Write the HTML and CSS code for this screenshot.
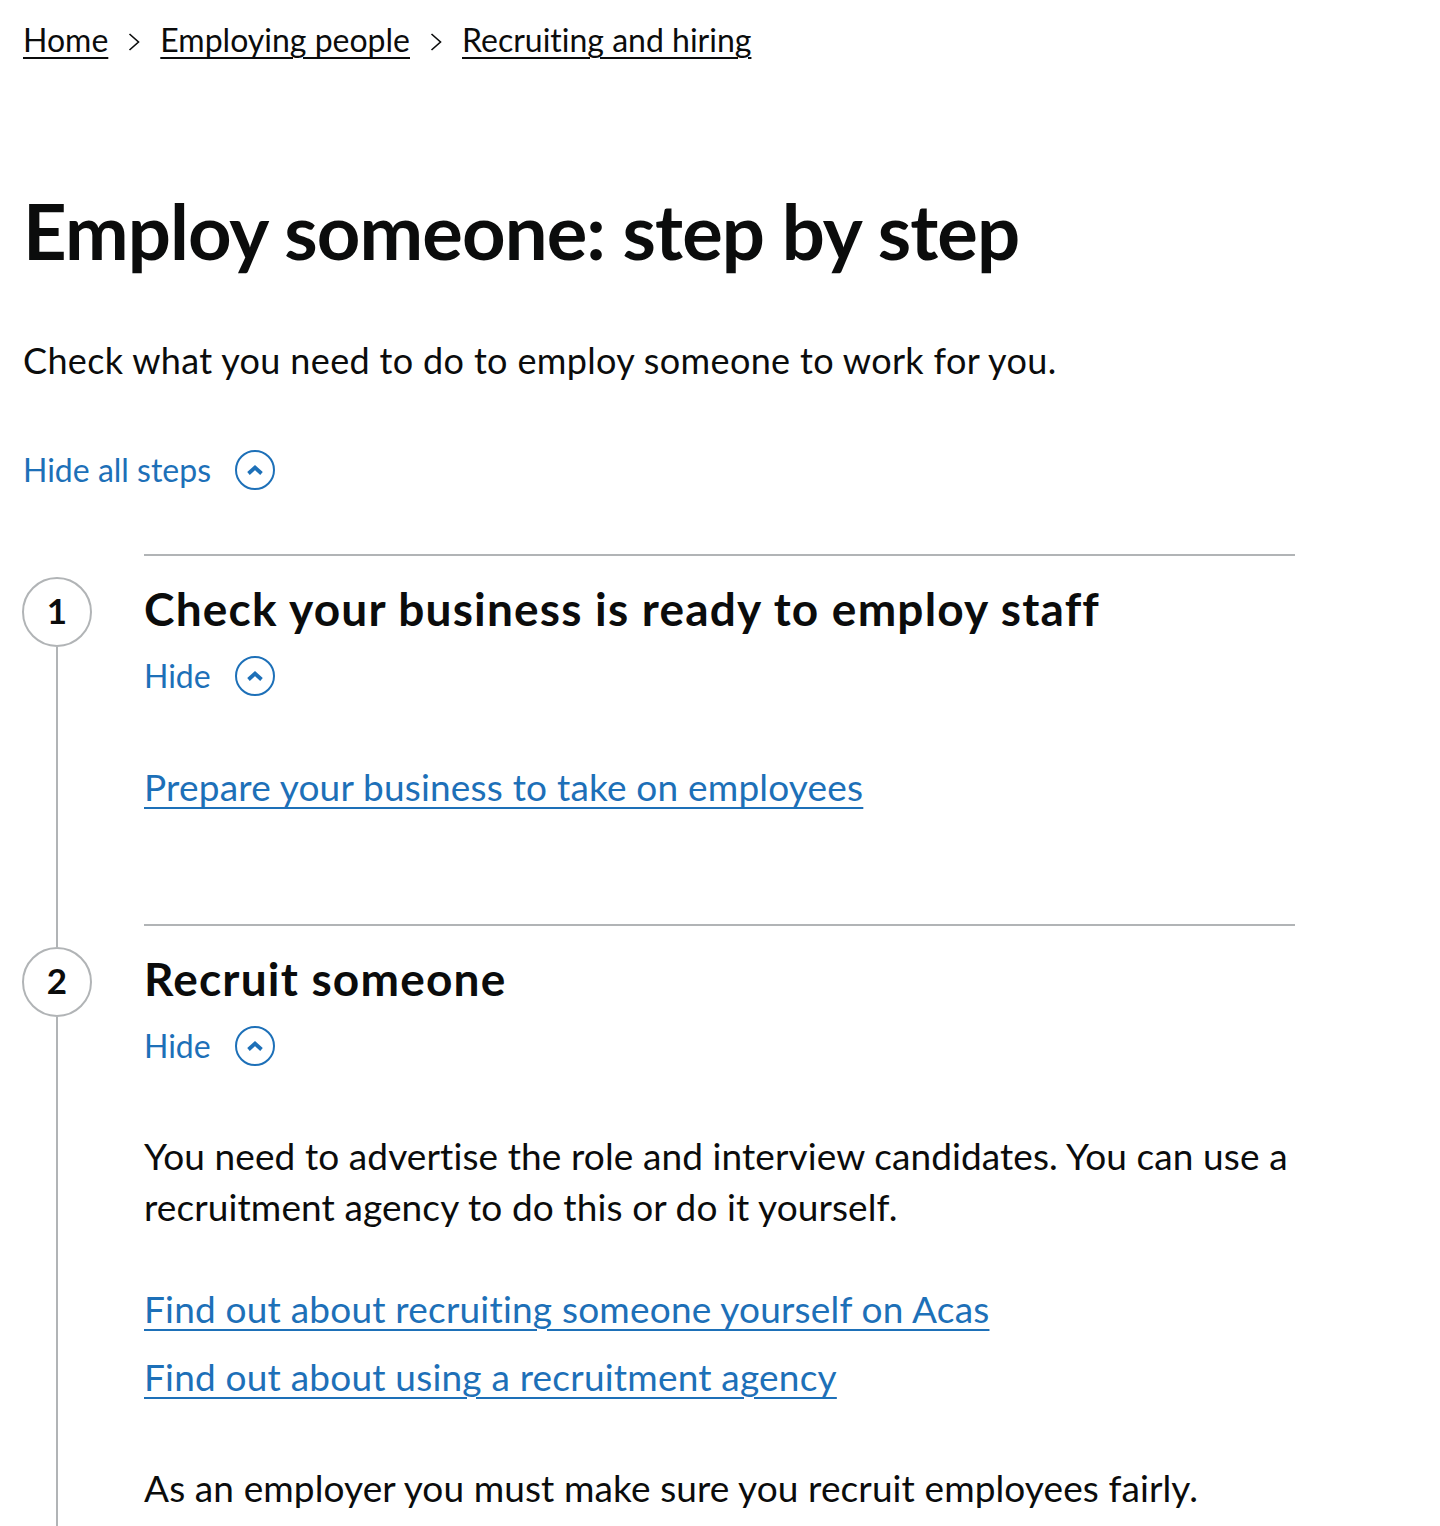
FILE: index.html
```html
<!DOCTYPE html>
<html lang="en">
<head>
<meta charset="utf-8">
<title>Employ someone: step by step</title>
<link rel="stylesheet" href="styles.css">
</head>
<body>
<div class="page">
  <nav class="breadcrumbs">
    <a href="#">Home</a>
    <svg class="crumb-sep" width="12" height="18" viewBox="0 0 12 18"><polyline points="1.5,1 10.5,9 1.5,17" fill="none" stroke="#0b0c0c" stroke-width="1.6"/></svg>
    <a href="#">Employing people</a>
    <svg class="crumb-sep" width="12" height="18" viewBox="0 0 12 18"><polyline points="1.5,1 10.5,9 1.5,17" fill="none" stroke="#0b0c0c" stroke-width="1.6"/></svg>
    <a href="#">Recruiting and hiring</a>
  </nav>

  <h1 class="title">Employ someone: step by step</h1>
  <p class="lead">Check what you need to do to employ someone to work for you.</p>

  <div class="toggle toggle-all">
    <span class="toggle-text">Hide all steps</span>
    <svg class="chev" width="40" height="40" viewBox="0 0 40 40"><circle cx="20" cy="20" r="19" fill="none" stroke="#1d70b8" stroke-width="2"/><polyline points="13.5,23.5 20,17.5 26.5,23.5" fill="none" stroke="#1d70b8" stroke-width="3.8"/></svg>
  </div>

  <ol class="steps">
    <li class="step first">
      <div class="rail">
        <div class="rail-top"></div>
        <div class="num">1</div>
        <div class="rail-bottom"></div>
      </div>
      <div class="content">
        <h2 class="step-title">Check your business is ready to employ staff</h2>
        <div class="toggle">
          <span class="toggle-text">Hide</span>
          <svg class="chev" width="40" height="40" viewBox="0 0 40 40"><circle cx="20" cy="20" r="19" fill="none" stroke="#1d70b8" stroke-width="2"/><polyline points="13.5,23.5 20,17.5 26.5,23.5" fill="none" stroke="#1d70b8" stroke-width="3.8"/></svg>
        </div>
        <ul class="links first-links">
          <li><a href="#">Prepare your business to take on employees</a></li>
        </ul>
      </div>
    </li>
    <li class="step last">
      <div class="rail">
        <div class="rail-top"></div>
        <div class="num">2</div>
        <div class="rail-bottom"></div>
      </div>
      <div class="content">
        <h2 class="step-title">Recruit someone</h2>
        <div class="toggle">
          <span class="toggle-text">Hide</span>
          <svg class="chev" width="40" height="40" viewBox="0 0 40 40"><circle cx="20" cy="20" r="19" fill="none" stroke="#1d70b8" stroke-width="2"/><polyline points="13.5,23.5 20,17.5 26.5,23.5" fill="none" stroke="#1d70b8" stroke-width="3.8"/></svg>
        </div>
        <p class="body">You need to advertise the role and interview candidates. You can use a recruitment agency to do this or do it yourself.</p>
        <ul class="links">
          <li><a href="#">Find out about recruiting someone yourself on Acas</a></li>
          <li><a href="#">Find out about using a recruitment agency</a></li>
        </ul>
        <p class="body">As an employer you must make sure you recruit employees fairly.</p>
      </div>
    </li>
  </ol>
</div>
</body>
</html>
```

FILE: styles.css
```css
html, body {
  margin: 0;
  padding: 0;
  background: #ffffff;
}

body {
  font-family: Lato, "Noto Sans", Arial, sans-serif;
  color: #0b0c0c;
  overflow: hidden;
  height: 1526px;
  font-variant-ligatures: none;
  font-feature-settings: "liga" 0, "clig" 0;
}

.page {
  padding: 20px 23px 0 23px;
}

a {
  color: inherit;
}

/* Breadcrumbs */
.breadcrumbs {
  display: flex;
  align-items: center;
  font-size: 32px;
  line-height: 40px;
  gap: 20px;
}

.breadcrumbs a {
  color: #0b0c0c;
  text-decoration: underline;
  text-decoration-thickness: 2px;
  text-underline-offset: 5px;
}

.crumb-sep {
  display: block;
  margin-top: 4px;
}

/* Heading */
.title {
  margin: 126px 0 0 0;
  font-size: 76px;
  line-height: 90px;
  font-weight: 700;
  letter-spacing: -0.9px;
}

.lead {
  margin: 62px 0 0 0;
  font-size: 36px;
  line-height: 45px;
  letter-spacing: 0.35px;
}

/* toggles */
.toggle {
  display: flex;
  align-items: center;
  gap: 24px;
  color: #1d70b8;
  font-size: 32px;
  line-height: 40px;
}

.toggle-all {
  margin-top: 67px;
}

.chev {
  display: block;
}

/* steps */
.steps {
  list-style: none;
  margin: 64px 0 0 0;
  padding: 0;
}

.step {
  display: grid;
  grid-template-columns: 121px 1151px;
}

.rail {
  display: flex;
  flex-direction: column;
  align-items: flex-start;
}

.rail-top {
  width: 2px;
  height: 23px;
  margin-left: 33px;
  background: #b1b4b6;
}

.first .rail-top {
  background: transparent;
}

.rail-bottom {
  width: 2px;
  flex: 1;
  margin-left: 33px;
  background: #b1b4b6;
}

.num {
  box-sizing: border-box;
  width: 70px;
  height: 70px;
  margin-left: -1px;
  padding-bottom: 5px;
  border: 2px solid #b1b4b6;
  border-radius: 50%;
  display: flex;
  align-items: center;
  justify-content: center;
  font-size: 35px;
  font-weight: 700;
  background: #fff;
}

.content {
  border-top: 2px solid #b1b4b6;
  padding-top: 25px;
}

.first .content {
  padding-bottom: 112px;
}

.last .content {
  padding-bottom: 80px;
}

.step-title {
  margin: 0 0 20px 0;
  font-size: 46px;
  line-height: 55px;
  font-weight: 700;
  letter-spacing: 1.2px;
}

.links {
  list-style: none;
  margin: 65px 0 0 0;
  padding: 0;
}

.links li + li {
  margin-top: 17px;
}

.links a {
  color: #1d70b8;
  text-decoration: underline;
  text-decoration-thickness: 2px;
  text-underline-offset: 6px;
}

.links li {
  font-size: 37px;
  line-height: 51px;
  letter-spacing: 0.2px;
}

.body {
  margin: 64px 0 0 0;
  font-size: 37px;
  line-height: 51px;
  letter-spacing: 0.1px;
}

.links + .body {
  margin-top: 60px;
}

.body + .links {
  margin-top: 51px;
}
```
